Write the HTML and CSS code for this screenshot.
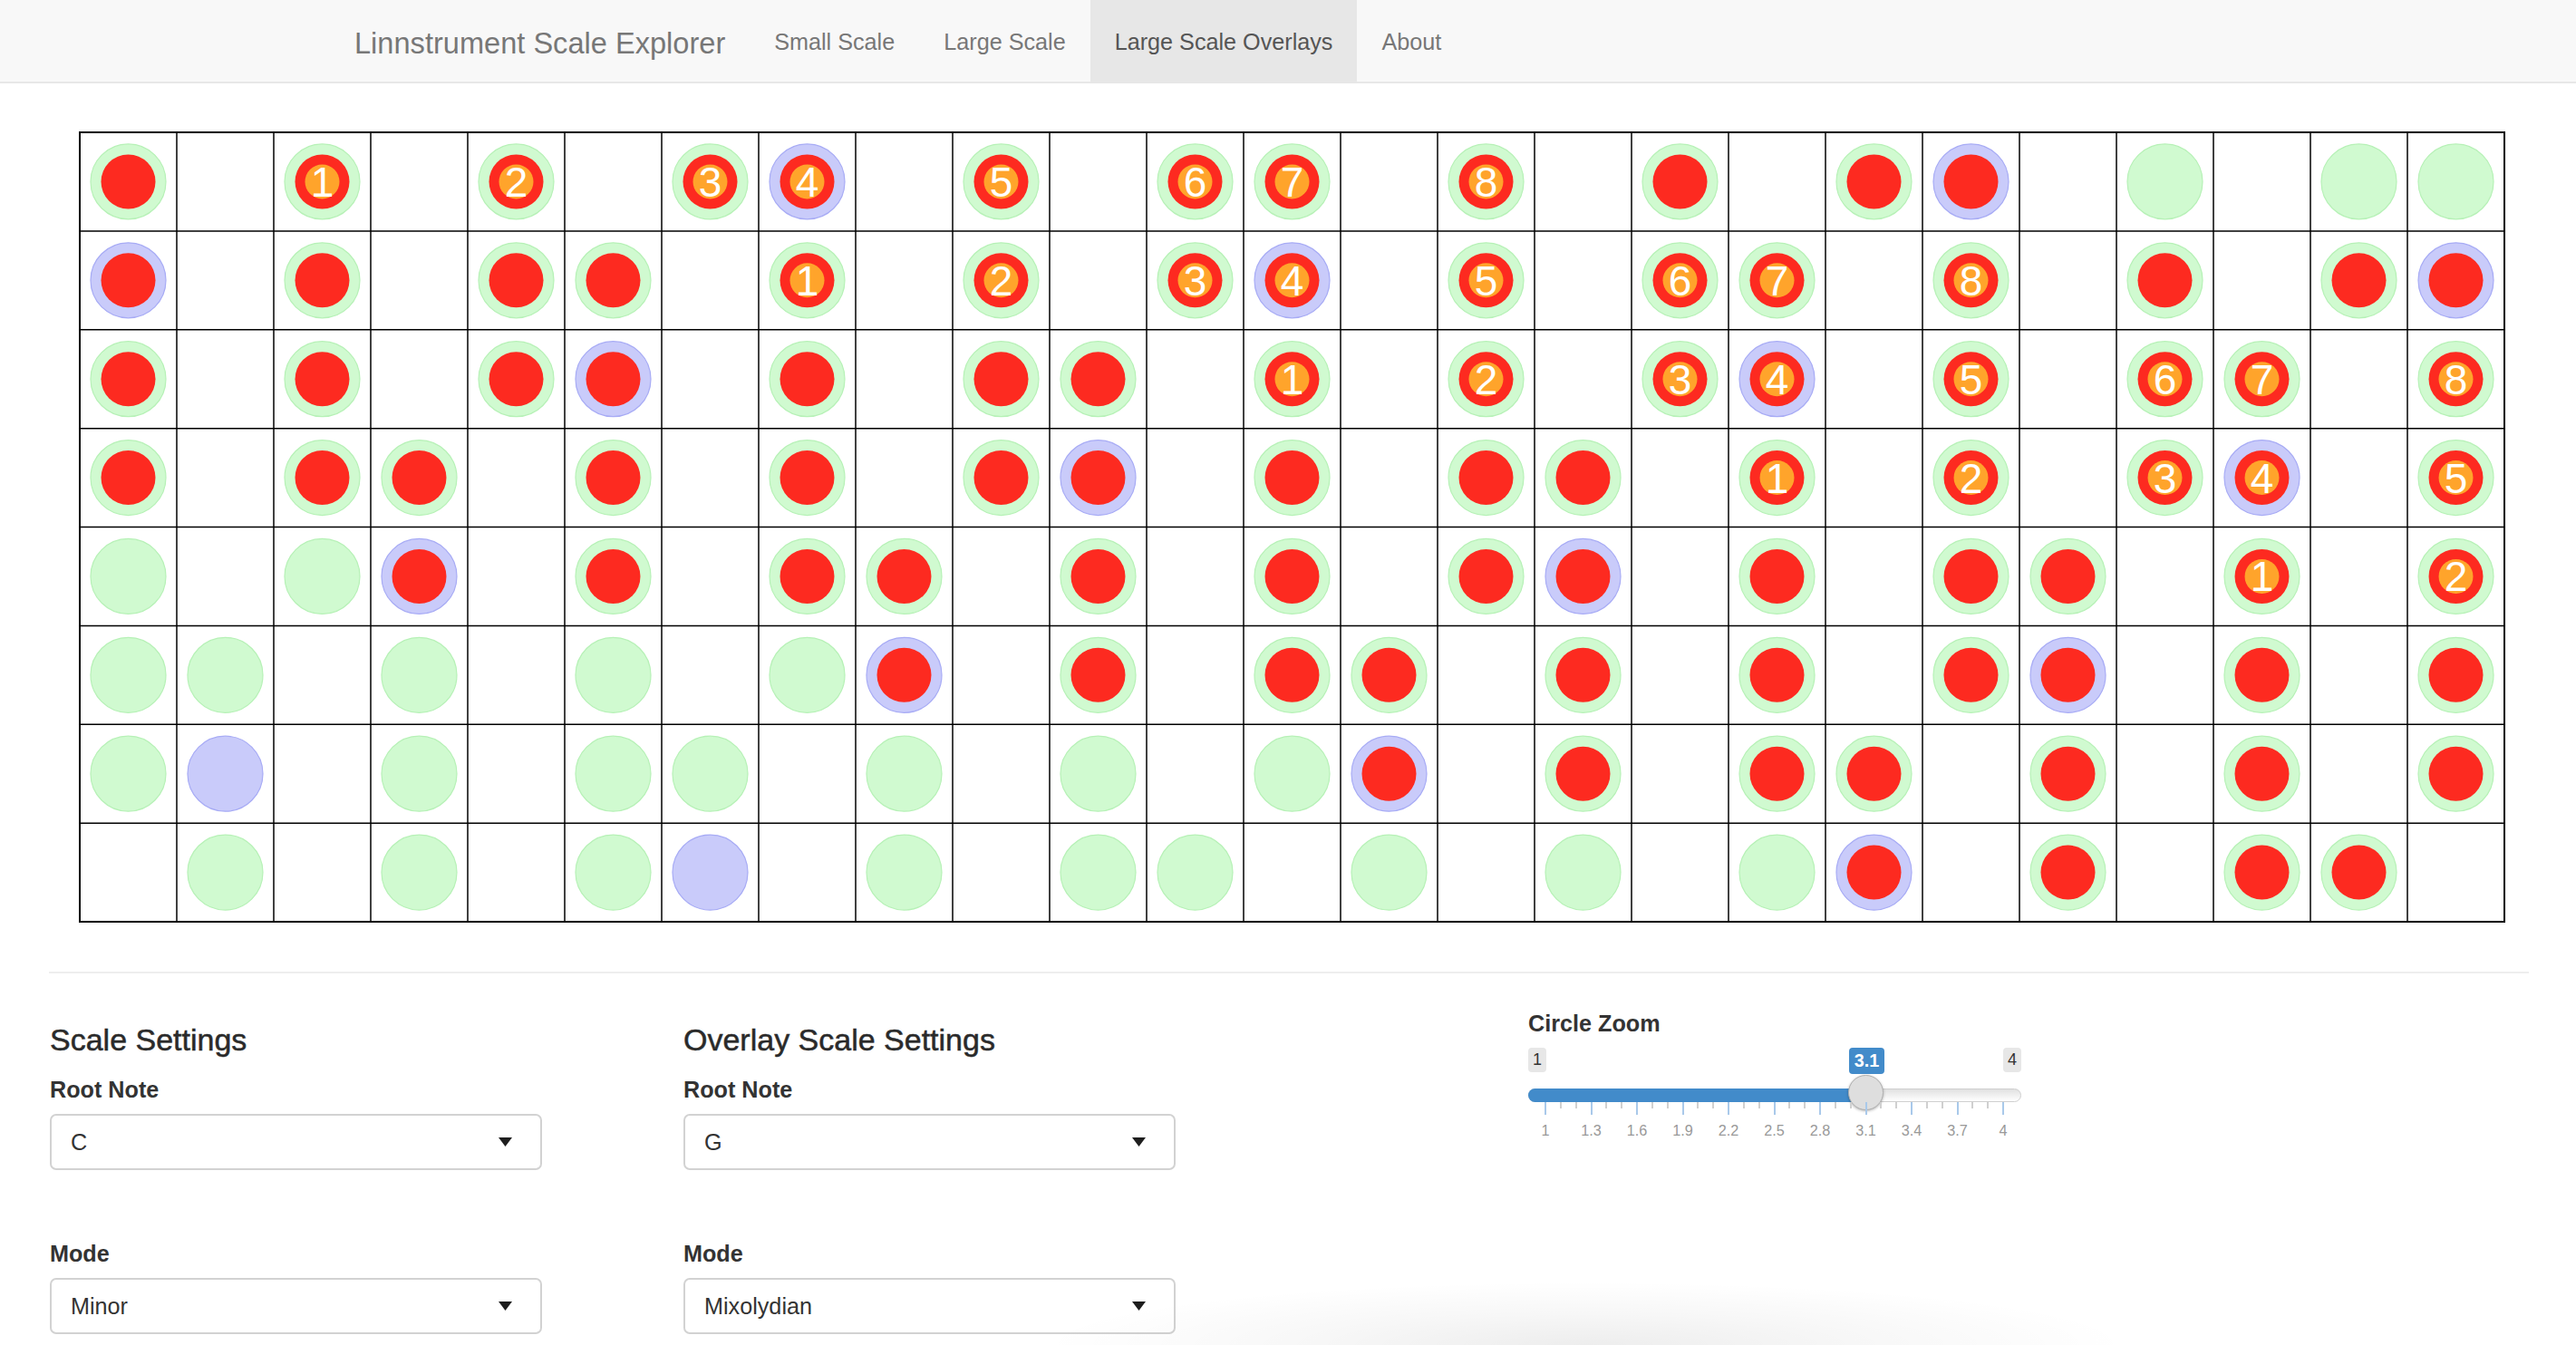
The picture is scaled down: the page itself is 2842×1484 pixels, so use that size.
FILE: index.html
```html
<!DOCTYPE html>
<html lang="en">
<head>
<meta charset="utf-8">
<title>Linnstrument Scale Explorer</title>
<link rel="stylesheet" href="styles.css">
</head>
<body>
<nav class="navbar">
  <div class="nav-inner">
    <span class="brand">Linnstrument Scale Explorer</span>
    <ul class="nav">
      <li><a href="#">Small Scale</a></li>
      <li><a href="#">Large Scale</a></li>
      <li class="active"><a href="#">Large Scale Overlays</a></li>
      <li><a href="#">About</a></li>
    </ul>
  </div>
</nav>
<main class="content">
  <div class="board-wrap">
    <svg id="board" class="board" width="2677" height="873" viewBox="0 0 2677 873" xmlns="http://www.w3.org/2000/svg"></svg>
  </div>
  <hr class="divider">
  <div class="settings">
    <section class="col">
      <h4 class="col-title">Scale Settings</h4>
      <div class="form-group">
        <label class="control-label">Root Note</label>
        <div class="select"><span>C</span><svg class="caret" width="15" height="10" viewBox="0 0 15 10"><polygon points="0,0 15,0 7.5,10"/></svg></div>
      </div>
      <div class="form-group">
        <label class="control-label">Mode</label>
        <div class="select"><span>Minor</span><svg class="caret" width="15" height="10" viewBox="0 0 15 10"><polygon points="0,0 15,0 7.5,10"/></svg></div>
      </div>
    </section>
    <section class="col">
      <h4 class="col-title">Overlay Scale Settings</h4>
      <div class="form-group">
        <label class="control-label">Root Note</label>
        <div class="select"><span>G</span><svg class="caret" width="15" height="10" viewBox="0 0 15 10"><polygon points="0,0 15,0 7.5,10"/></svg></div>
      </div>
      <div class="form-group">
        <label class="control-label">Mode</label>
        <div class="select"><span>Mixolydian</span><svg class="caret" width="15" height="10" viewBox="0 0 15 10"><polygon points="0,0 15,0 7.5,10"/></svg></div>
      </div>
    </section>
    <section class="col">
      <label class="control-label">Circle Zoom</label>
      <div class="slider" id="slider">
        <span class="irs-min">1</span>
        <span class="irs-max">4</span>
        <div class="irs-line"></div>
        <div class="irs-bar"></div>
        <span class="irs-single">3.1</span>
        <span class="irs-handle"></span>
        <div class="irs-grid" id="grid"></div>
      </div>
    </section>
  </div>
</main>
<div class="shade"></div>
<script src="app.js"></script>
</body>
</html>
```

FILE: styles.css
```css
html, body {
  margin: 0;
  padding: 0;
  overflow: hidden;
  background: #fff;
}
body {
  width: 2842px;
  height: 1484px;
  position: relative;
  font-family: "Liberation Sans", Arial, sans-serif;
  color: #333;
}

/* navbar */
.navbar {
  height: 90px;
  background: #f8f8f8;
  border-bottom: 2px solid #e7e7e7;
}
.nav-inner {
  display: flex;
  height: 90px;
  padding-left: 364px;
}
.brand {
  font-size: 32.6px;
  color: #777;
  padding: 6px 27px 0;
  line-height: 84px;
  white-space: nowrap;
}
.nav {
  display: flex;
  list-style: none;
  margin: 0;
  padding: 0;
}
.nav a {
  display: block;
  padding: 2px 27px 0;
  line-height: 88px;
  font-size: 25.2px;
  color: #777;
  text-decoration: none;
  white-space: nowrap;
}
.nav .active a {
  background: #e7e7e7;
  color: #555;
}

/* board */
.board-wrap {
  padding: 53px 0 0 87px;
}
.board {
  display: block;
}
.board .line {
  stroke: #000;
  stroke-width: 1.5;
}
.board .frame {
  fill: none;
  stroke: #000;
  stroke-width: 2;
}
.board .ring {
  fill: #d0fad0;
  stroke: #b6f1b6;
  stroke-width: 1.2;
}
.board .ring.root {
  fill: #c9cbfa;
  stroke: #a7abf5;
}
.board .note {
  fill: #fd2a20;
}
.board .deg {
  fill: #ffa42b;
}
.board .num {
  fill: #fff;
  font-family: "Liberation Sans", Arial, sans-serif;
  font-size: 46px;
  text-anchor: middle;
}

.divider {
  border: 0;
  height: 2px;
  background: #eee;
  margin: 54px 52px 0 54px;
}

/* settings */
.settings {
  display: grid;
  grid-template-columns: 699px 932px 544px;
  padding-left: 55px;
  margin-top: 37px;
}
.col-title {
  font-size: 34px;
  line-height: 37.4px;
  font-weight: 500;
  margin: 18px 0 18px;
  color: #2a2a2a;
  -webkit-text-stroke: 0.5px #2a2a2a;
}
.control-label {
  display: block;
  font-weight: 700;
  font-size: 25.2px;
  line-height: 36px;
  margin-bottom: 9px;
  color: #333;
}
.form-group {
  margin-bottom: 74px;
}
.form-group:last-child {
  margin-bottom: 0;
}
.select {
  box-sizing: border-box;
  width: 543px;
  height: 62px;
  border: 2px solid #d2d2d2;
  border-radius: 7px;
  background: #fff;
  display: flex;
  align-items: center;
  justify-content: space-between;
  padding: 0 31px 0 21px;
  font-size: 25.2px;
  color: #333;
}
.caret {
  fill: #1e1e1e;
  display: block;
}

/* slider */
.slider {
  position: relative;
  width: 544px;
  height: 110px;
}
.irs-min, .irs-max {
  position: absolute;
  top: 0;
  height: 27px;
  width: 20px;
  background: #e7e7e7;
  border-radius: 4px;
  font-size: 18px;
  line-height: 27px;
  text-align: center;
  color: #333;
}
.irs-min { left: 0; }
.irs-max { right: 0; }
.irs-single {
  position: absolute;
  top: 0;
  left: 354px;
  width: 39px;
  height: 29px;
  background: #428bca;
  border-radius: 4px;
  color: #fff;
  font-size: 19.8px;
  font-weight: 700;
  line-height: 29px;
  text-align: center;
}
.irs-line {
  position: absolute;
  top: 45px;
  left: 0;
  width: 544px;
  height: 15px;
  box-sizing: border-box;
  border: 1px solid #cfcfcf;
  border-radius: 9px;
  background: linear-gradient(to bottom, #dedede -10%, #fff 100%);
}
.irs-bar {
  position: absolute;
  top: 45px;
  left: 0;
  width: 373px;
  height: 15px;
  background: #428bca;
  border-radius: 9px 0 0 9px;
}
.irs-handle {
  position: absolute;
  top: 30px;
  left: 353px;
  width: 39px;
  height: 39px;
  box-sizing: border-box;
  border-radius: 50%;
  background: #dedede;
  border: 1px solid #b0b0b0;
  box-shadow: 0 1px 3px rgba(0, 0, 0, 0.3);
}
.irs-grid {
  position: absolute;
  left: 0;
  top: 60px;
  width: 544px;
  height: 50px;
}
.tick {
  position: absolute;
  top: 0;
  width: 2px;
  height: 7px;
  background: #d0d0d0;
}
.tick.major {
  height: 14px;
  background: #a9c9ea;
}
.tick-label {
  position: absolute;
  top: 23px;
  width: 60px;
  margin-left: -30px;
  text-align: center;
  font-size: 16.2px;
  line-height: 16.2px;
  color: #999;
}

.shade {
  position: absolute;
  left: 1150px;
  bottom: 0;
  width: 1200px;
  height: 70px;
  background: radial-gradient(ellipse 50% 100% at 50% 100%, rgba(0, 0, 0, 0.07) 0%, rgba(0, 0, 0, 0.03) 50%, rgba(0, 0, 0, 0) 100%);
  pointer-events: none;
}
```

FILE: app.js
```javascript
(function () {
  var NS = 'http://www.w3.org/2000/svg';
  var svg = document.getElementById('board');
  var COLS = 25, ROWS = 8, CW = 107, CH = 108.875, OFF = 1;
  var W = COLS * CW, H = ROWS * CH;
  var inScale = [0, 2, 4, 6, 7, 9, 11];
  var degrees = { 2: 1, 4: 2, 6: 3, 7: 4, 9: 5, 11: 6, 12: 7, 14: 8 };

  function el(name, attrs, parent) {
    var e = document.createElementNS(NS, name);
    for (var k in attrs) e.setAttribute(k, attrs[k]);
    (parent || svg).appendChild(e);
    return e;
  }

  for (var c = 1; c < COLS; c++) {
    var x = OFF + c * CW;
    el('line', { x1: x, y1: OFF, x2: x, y2: OFF + H, 'class': 'line' });
  }
  for (var r = 1; r < ROWS; r++) {
    var y = OFF + r * CH;
    el('line', { x1: OFF, y1: y, x2: OFF + W, y2: y, 'class': 'line' });
  }
  el('rect', { x: OFF, y: OFF, width: W, height: H, 'class': 'frame' });

  for (var row = 0; row < ROWS; row++) {
    for (var col = 0; col < COLS; col++) {
      var p = col - 5 * row;
      var pc = ((p % 12) + 12) % 12;
      if (inScale.indexOf(pc) < 0) continue;
      var cx = OFF + col * CW + CW / 2;
      var cy = OFF + row * CH + CH / 2;
      el('circle', { cx: cx, cy: cy, r: 41.5, 'class': pc === 7 ? 'ring root' : 'ring' });
      if (p >= -17 && p <= 19) {
        el('circle', { cx: cx, cy: cy, r: 30, 'class': 'note' });
        if (degrees[p]) {
          el('circle', { cx: cx, cy: cy, r: 19, 'class': 'deg' });
          var t = el('text', { x: cx, y: cy + 16.5, 'class': 'num' });
          t.textContent = String(degrees[p]);
        }
      }
    }
  }

  var grid = document.getElementById('grid');
  var x0 = 19, span = 505;
  for (var k = 0; k <= 30; k++) {
    var v = 1 + k * 0.1;
    var px = x0 + span * (k / 30);
    var tick = document.createElement('span');
    tick.className = (k % 3 === 0) ? 'tick major' : 'tick';
    tick.style.left = (px - 1).toFixed(2) + 'px';
    grid.appendChild(tick);
    if (k % 3 === 0) {
      var lab = document.createElement('span');
      lab.className = 'tick-label';
      lab.style.left = px.toFixed(2) + 'px';
      lab.textContent = (Math.round(v * 10) / 10).toString();
      grid.appendChild(lab);
    }
  }
})();
```
